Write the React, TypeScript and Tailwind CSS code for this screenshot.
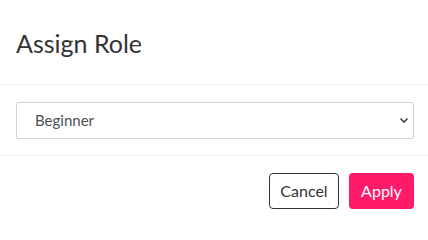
import { useState } from 'react';

export default function App() {
  const [role, setRole] = useState('beginner');

  return (
    <div className="w-[428px] h-[227px] bg-white font-['Lato',sans-serif] text-[#333]">
      <div className="h-[85px] border-b border-[#eceef0] pl-4 pr-[14px] pt-[27px]">
        <h2 className="text-[25px] leading-[32px] font-normal text-[#333]">Assign Role</h2>
      </div>
      <div className="border-b border-[#eceef0] pl-4 pr-[14px] pt-[17px] pb-[16px]">
        <div className="relative">
          <select
            value={role}
            onChange={(e) => setRole(e.target.value)}
            className="h-[37px] w-full appearance-none rounded-[2px] border border-[#ced4da] bg-white pl-[18px] text-[15px] text-[#495057] outline-none"
          >
            <option value="beginner">Beginner</option>
            <option value="intermediate">Intermediate</option>
            <option value="advanced">Advanced</option>
          </select>
          <svg
            className="pointer-events-none absolute right-[5px] top-[15px]"
            width="10"
            height="7"
            viewBox="0 0 10 7"
            fill="none"
          >
            <path d="M1.5 1.5L5 5l3.5-3.5" stroke="#444" strokeWidth="1.6" />
          </svg>
        </div>
      </div>
      <div className="flex justify-end gap-[10px] pl-4 pr-[14px] pt-[17px]">
        <button className="h-[36px] w-[70px] rounded-[4px] border border-[#333] bg-white text-[16px] text-[#333]">
          Cancel
        </button>
        <button className="h-[36px] w-[65px] rounded-[4px] bg-[#ff1a6a] text-[16px] text-white">
          Apply
        </button>
      </div>
    </div>
  );
}
